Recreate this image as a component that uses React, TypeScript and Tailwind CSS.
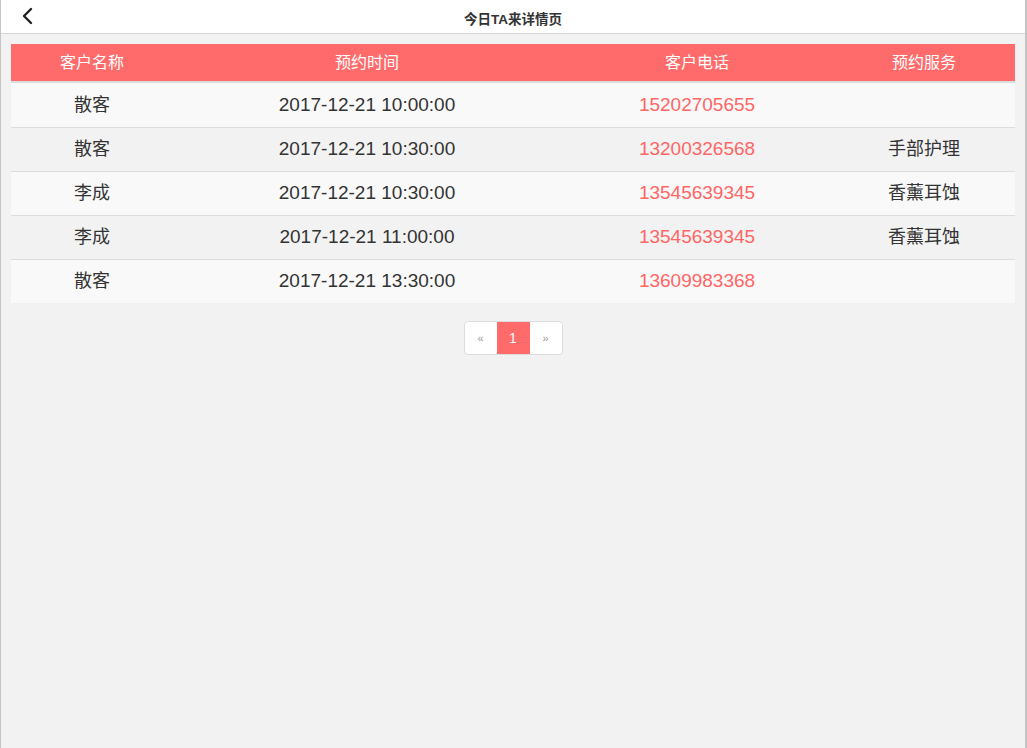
import React from 'react';

interface Booking {
  name: string;
  time: string;
  phone: string;
  service: string;
}

const BOOKINGS: Booking[] = [
  { name: '散客', time: '2017-12-21 10:00:00', phone: '15202705655', service: '' },
  { name: '散客', time: '2017-12-21 10:30:00', phone: '13200326568', service: '手部护理' },
  { name: '李成', time: '2017-12-21 10:30:00', phone: '13545639345', service: '香薰耳蚀' },
  { name: '李成', time: '2017-12-21 11:00:00', phone: '13545639345', service: '香薰耳蚀' },
  { name: '散客', time: '2017-12-21 13:30:00', phone: '13609983368', service: '' },
];

const COLS = 'grid grid-cols-[162px_388px_272px_182px]';

const App: React.FC = () => {
  return (
    <div
      className="w-full h-[748px] bg-[#f2f2f2] border-l border-r-2 border-[#c4c4c4] flex flex-col"
      style={{ fontFamily: '"Liberation Sans", "Noto Sans CJK SC", sans-serif' }}
    >
      <header className="relative h-[34px] shrink-0 bg-white border-b border-[#d6d6d6] flex items-center justify-center">
        <button className="absolute left-[16px] top-[6px] w-[20px] h-[20px] flex items-center justify-center">
          <svg width="12" height="18" viewBox="0 0 12 18" fill="none">
            <polyline points="10,2 3,9 10,16" stroke="#222" strokeWidth="2.4" strokeLinecap="round" strokeLinejoin="round" />
          </svg>
        </button>
        <h1 className="text-[13.5px] font-semibold text-[#333] pt-[7px]">今日TA来详情页</h1>
      </header>

      <div className="px-[10px] pt-[10px]">
        <div className={`${COLS} h-[37px] bg-[#ff6b6b] text-white text-[16px] items-center text-center border-b-2 border-[#dddddd] box-content`}>
          <div>客户名称</div>
          <div>预约时间</div>
          <div>客户电话</div>
          <div>预约服务</div>
        </div>
        {BOOKINGS.map((b, i) => (
          <div
            key={i}
            className={`${COLS} h-[44px] items-center text-center text-[19px] text-[#333] ${i > 0 ? 'border-t border-[#dddddd]' : ''} ${i % 2 === 0 ? 'bg-[#f9f9f9]' : 'bg-[#f2f2f2]'}`}
          >
            <div className="text-[18px]">{b.name}</div>
            <div>{b.time}</div>
            <div className="text-[#ff6666]">{b.phone}</div>
            <div className="text-[18px]">{b.service}</div>
          </div>
        ))}
      </div>

      <div className="flex justify-center pt-[18px]">
        <div className="flex h-[34px] rounded-[4px] border border-[#dddddd] bg-white overflow-hidden">
          <span className="w-[32px] flex items-center justify-center text-[11px] text-[#999]">«</span>
          <span className="w-[33px] flex items-center justify-center text-[14px] text-white bg-[#ff6b6b]">1</span>
          <span className="w-[32px] flex items-center justify-center text-[11px] text-[#999]">»</span>
        </div>
      </div>
    </div>
  );
};

export default App;
